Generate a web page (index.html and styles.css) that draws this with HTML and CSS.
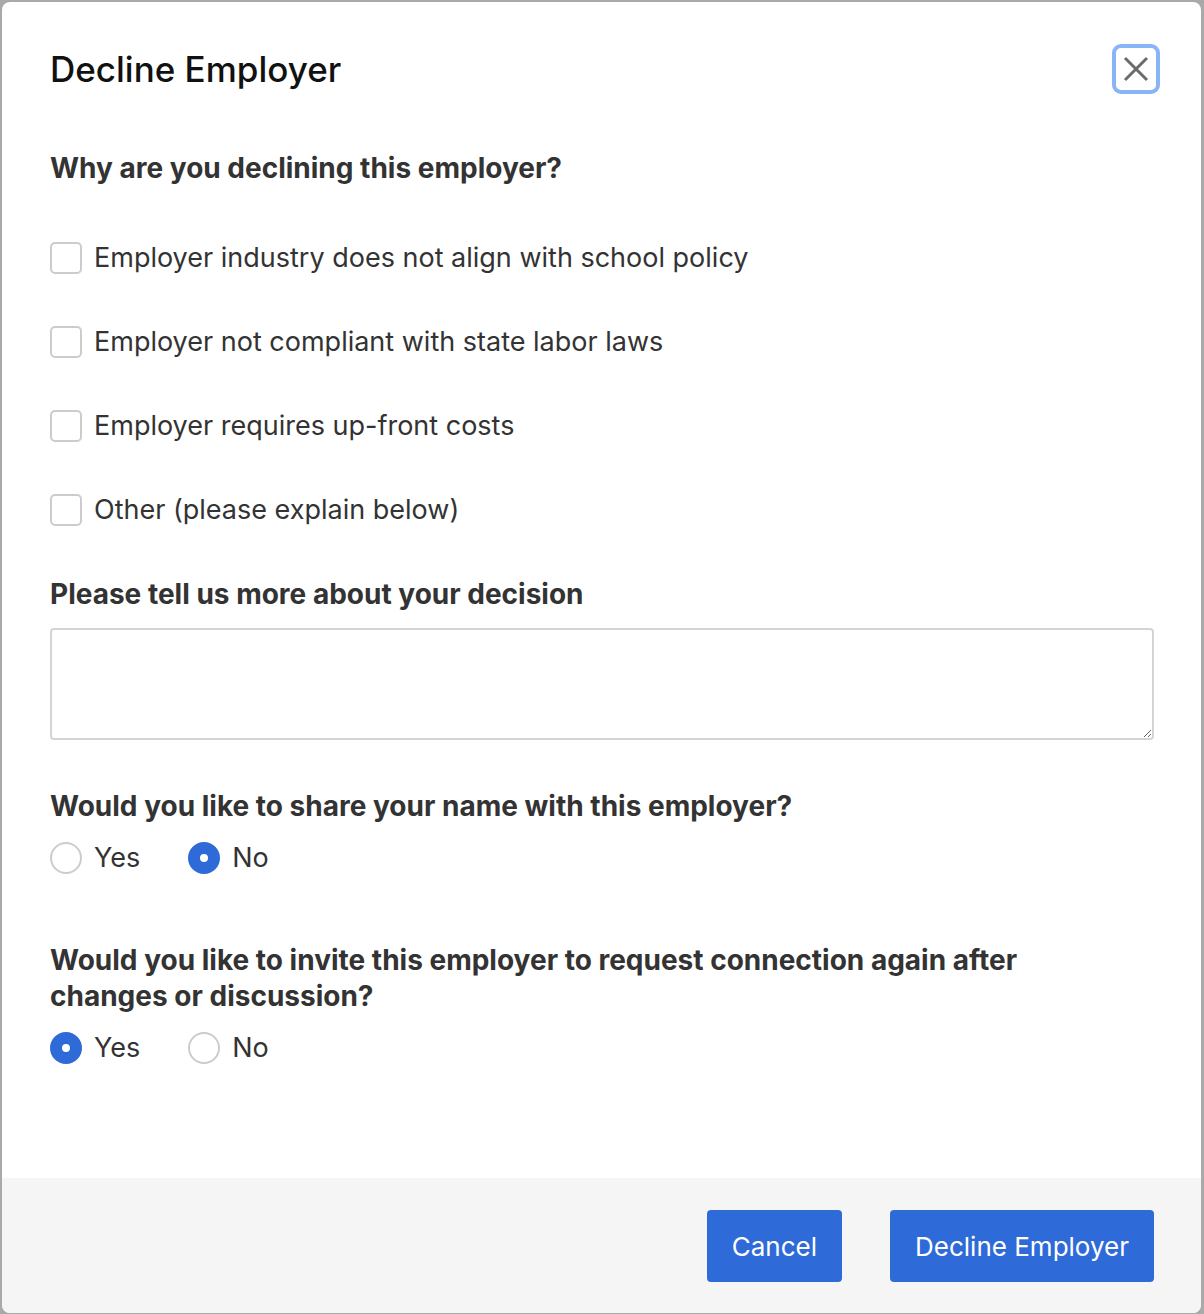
FILE: index.html
```html
<!DOCTYPE html>
<html lang="en">

<head>
    <meta charset="UTF-8">
    <meta name="viewport" content="width=device-width, initial-scale=1.0">
    <title>Decline Employer</title>
    <link rel="stylesheet" href="styles.css">
</head>

<body>
    <div class="modal">
        <div class="modal-header">
            <h1>Decline Employer</h1>
            <button class="close-btn" type="button" aria-label="Close">
                <svg width="26" height="26" viewBox="0 0 26 26">
                    <path d="M2 2 L24 24 M24 2 L2 24" stroke="#6b6b6b" stroke-width="3" fill="none" />
                </svg>
            </button>
        </div>

        <form class="modal-body" id="declineForm">
            <p class="question first">Why are you declining this employer?</p>
            <div class="options">
                <label class="option"><input type="checkbox" name="reason"> Employer industry does not align with school policy</label>
                <label class="option"><input type="checkbox" name="reason"> Employer not compliant with state labor laws</label>
                <label class="option"><input type="checkbox" name="reason"> Employer requires up-front costs</label>
                <label class="option"><input type="checkbox" name="reason"> Other (please explain below)</label>
            </div>

            <label class="question" for="details">Please tell us more about your decision</label>
            <textarea id="details" name="details"></textarea>

            <p class="question">Would you like to share your name with this employer?</p>
            <div class="radios">
                <label class="option"><input type="radio" name="share"> Yes</label>
                <label class="option"><input type="radio" name="share" checked> No</label>
            </div>

            <p class="question wide">Would you like to invite this employer to request connection again after changes or discussion?</p>
            <div class="radios">
                <label class="option"><input type="radio" name="invite" checked> Yes</label>
                <label class="option"><input type="radio" name="invite"> No</label>
            </div>
        </form>

        <div class="modal-footer">
            <button class="btn" type="button">Cancel</button>
            <button class="btn" type="submit" form="declineForm">Decline Employer</button>
        </div>
    </div>
</body>

</html>
```

FILE: styles.css
```css
body {
    margin: 0;
    background-color: #a9a9a9;
    font-family: Inter, "Noto Sans", sans-serif;
    overflow: hidden;
}

.modal {
    display: flex;
    flex-direction: column;
    height: 1311px;
    margin: 2px 3px 0 2px;
    background-color: #fff;
    border-radius: 8px;
    overflow: hidden;
}

.modal-header {
    display: flex;
    align-items: center;
    justify-content: space-between;
    padding: 42px 41px 0 48px;
}

h1 {
    margin: 0;
    font-size: 35px;
    font-weight: 500;
    color: #111;
}

.close-btn {
    width: 48px;
    height: 50px;
    padding: 0;
    display: flex;
    align-items: center;
    justify-content: center;
    background: #fff;
    border: 4px solid #8ab4f8;
    border-radius: 9px;
}

.modal-body {
    display: flex;
    flex-direction: column;
    padding: 0 47px 0 48px;
}

.question {
    display: block;
    margin: 48px 0 16px;
    font-size: 28px;
    font-weight: 700;
    line-height: 36px;
    color: #333;
}

.question.first {
    margin-top: 56px;
    margin-bottom: 54px;
}

.question.wide {
    margin-top: 66px;
    max-width: 1000px;
}

.options {
    display: flex;
    flex-direction: column;
    gap: 48px;
}

.option {
    display: flex;
    align-items: center;
    gap: 12px;
    font-size: 27px;
    line-height: 36px;
    color: #333;
}

.radios {
    display: flex;
    gap: 48px;
}

input[type="checkbox"],
input[type="radio"] {
    appearance: none;
    margin: 0;
    width: 32px;
    height: 32px;
    flex: none;
    border: 2px solid #ccc;
    background: #fff;
}

input[type="checkbox"] {
    border-radius: 5px;
}

input[type="radio"] {
    border-radius: 50%;
}

input[type="radio"]:checked {
    border: 12px solid #2f6bd8;
}

textarea {
    height: 112px;
    box-sizing: border-box;
    border: 2px solid #d4d4d4;
    border-radius: 4px;
    font-family: inherit;
    font-size: 26px;
}

.modal-footer {
    display: flex;
    justify-content: flex-end;
    gap: 48px;
    margin-top: auto;
    padding: 32px 47px 31px;
    background-color: #f5f5f5;
}

.btn {
    height: 72px;
    padding: 0 25px;
    border: none;
    border-radius: 4px;
    background-color: #2f6bd8;
    color: #fff;
    font-family: inherit;
    font-size: 26px;
    cursor: pointer;
}
```
